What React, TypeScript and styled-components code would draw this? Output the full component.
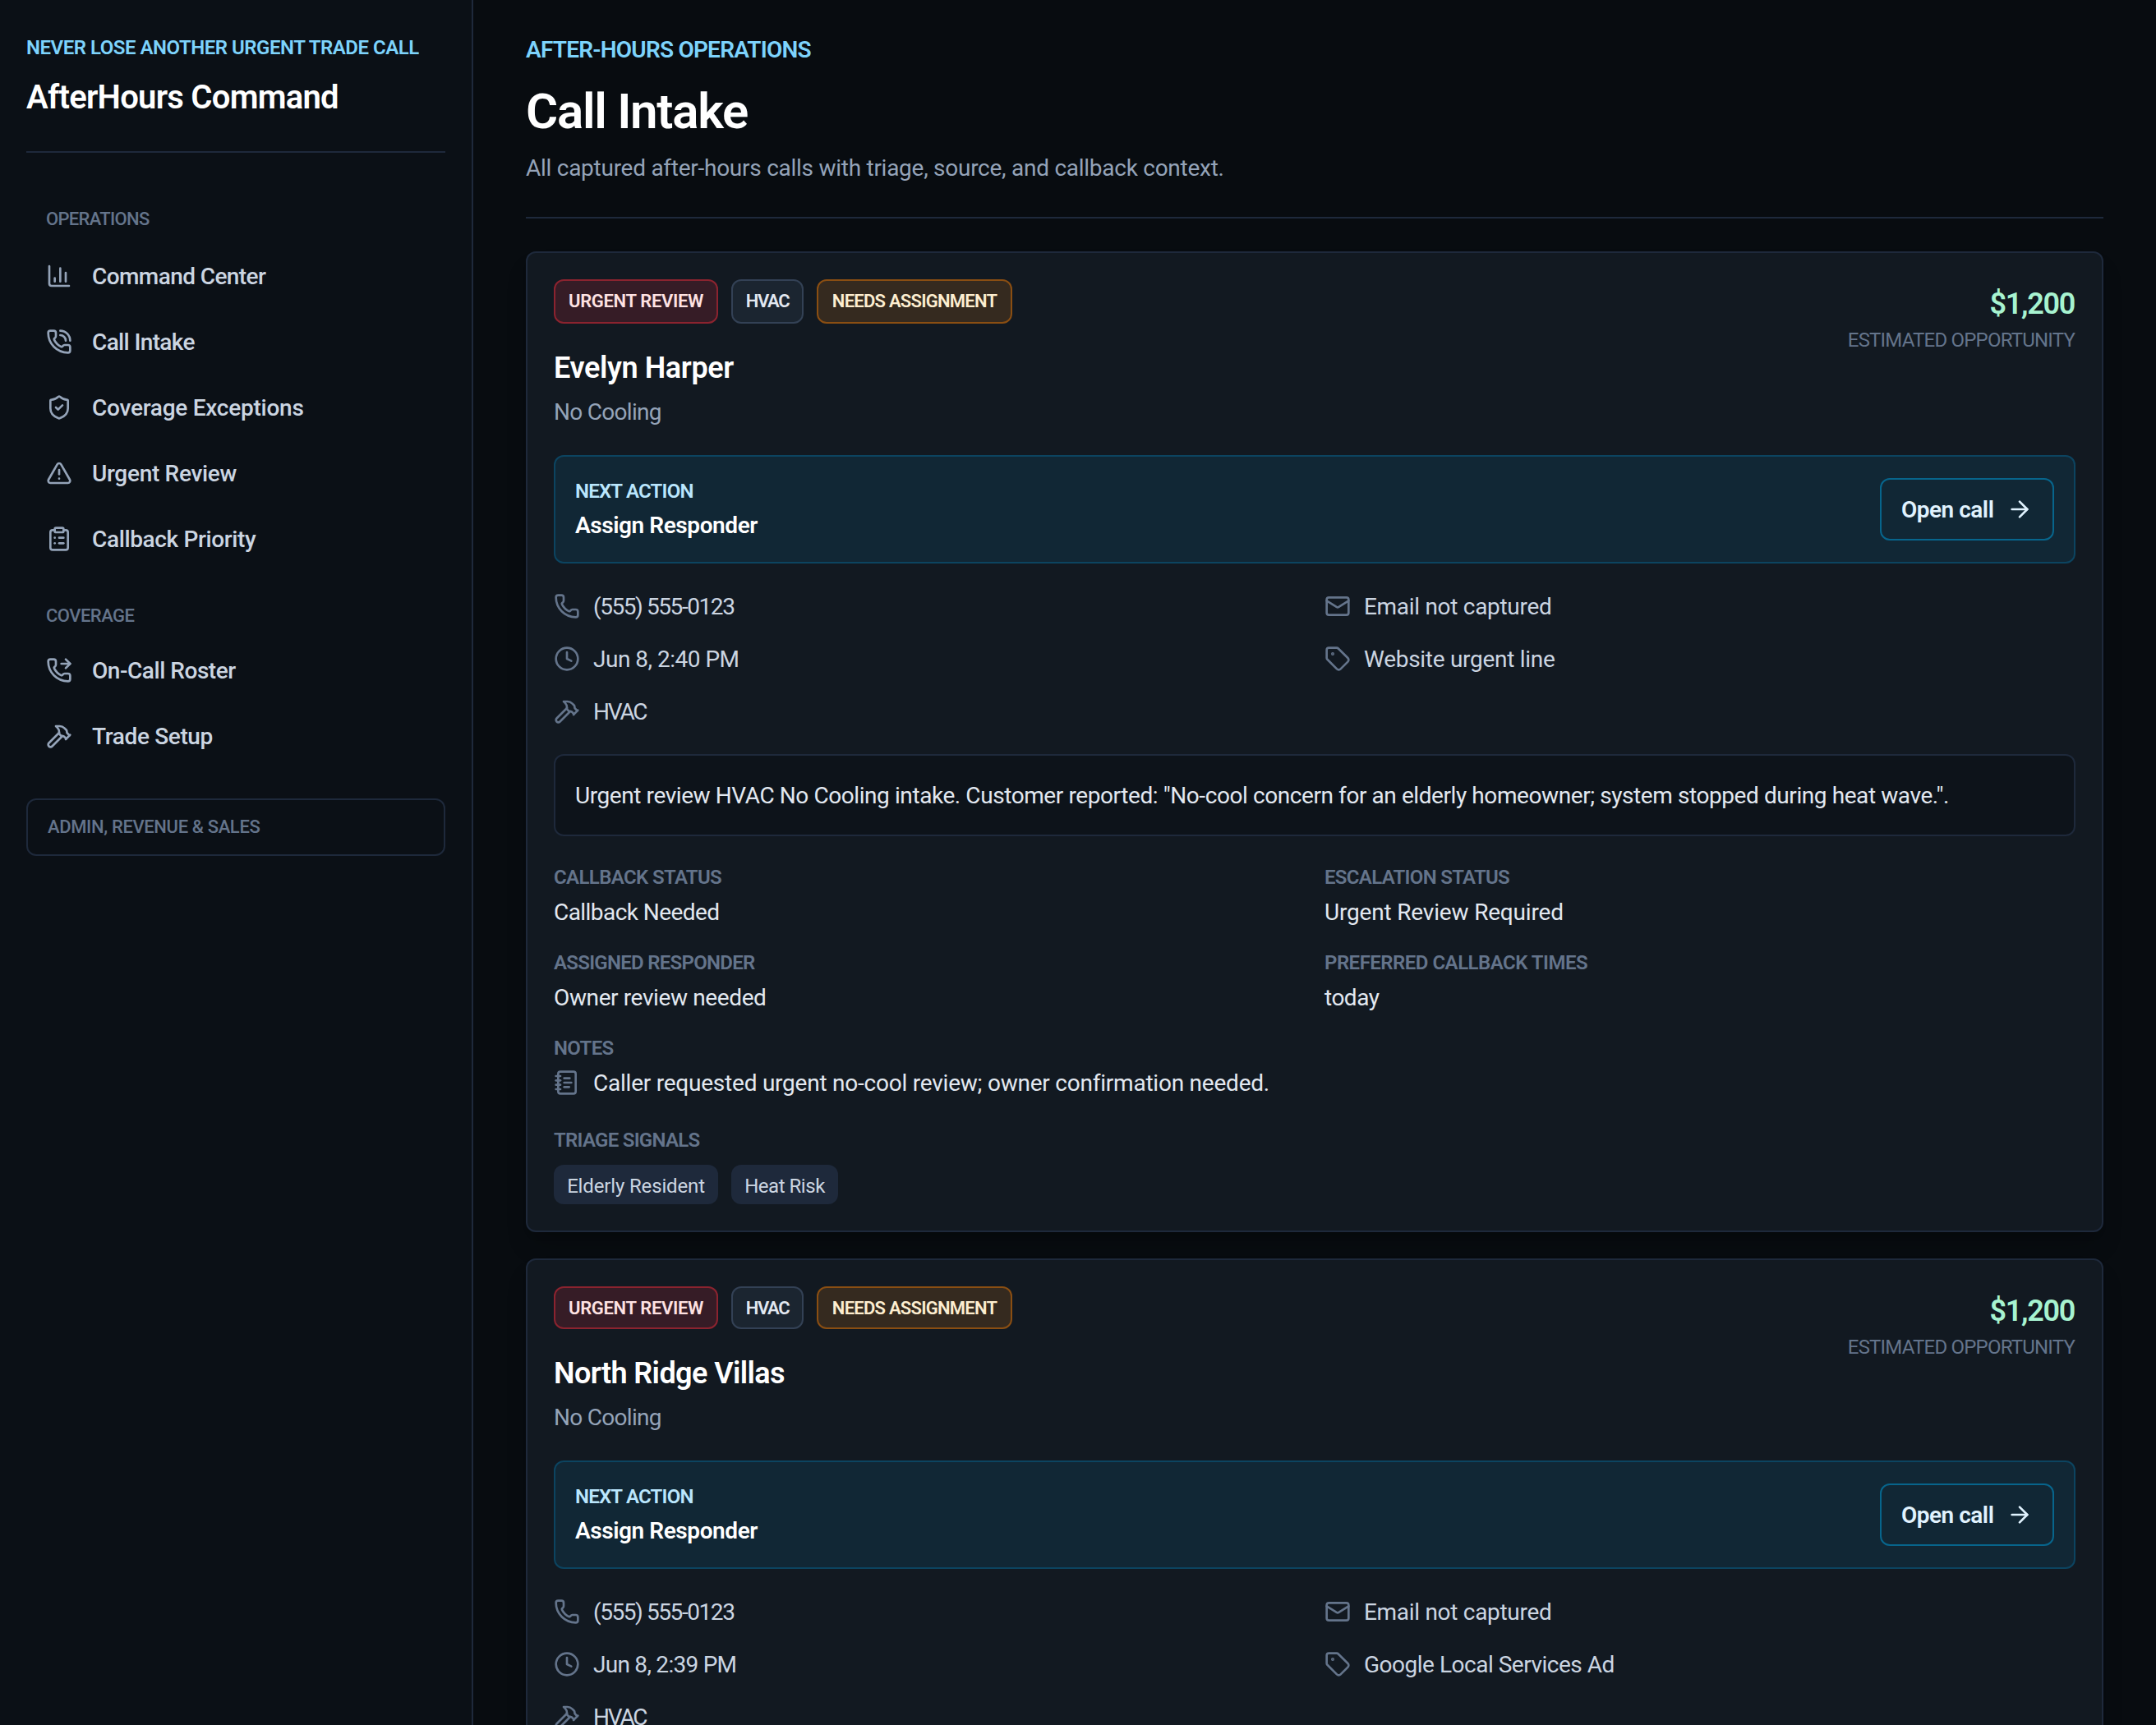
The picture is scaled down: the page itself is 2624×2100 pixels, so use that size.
import React from 'react';
import styled, { createGlobalStyle, css } from 'styled-components';
import {
  ArrowRight,
  ChartColumn,
  ClipboardList,
  Clock,
  Hammer,
  Mail,
  NotebookText,
  Phone,
  PhoneCall,
  PhoneForwarded,
  ShieldCheck,
  Tag,
  TriangleAlert,
  type LucideIcon,
} from 'lucide-react';

const color = {
  page: '#080c10',
  sidebar: '#0b1016',
  card: '#121921',
  inset: '#0d131a',
  line: '#1e293b',
  text: '#e2e8f0',
  soft: '#cbd5e1',
  muted: '#94a3b8',
  faint: '#64748b',
};

const GlobalStyle = createGlobalStyle`
  *, *::before, *::after { box-sizing: border-box; }
  body {
    margin: 0;
    background: ${color.page};
    color: ${color.text};
    font-family: Roboto, "Liberation Sans", sans-serif;
  }
  h1, h2, p, dl, dt, dd, ul { margin: 0; padding: 0; }
`;

/* Every text piece carries its own tracking, in pixels. */
type Tracked = { $track?: number };

const type = (size: number, line: number, weight: number) => css<Tracked>`
  font-size: ${size}px;
  line-height: ${line}px;
  font-weight: ${weight};
  letter-spacing: ${p => p.$track ?? 0}px;
  white-space: nowrap;
`;

const Shell = styled.div`
  display: flex;
  height: 2100px;
  overflow: hidden;
`;

const Sidebar = styled.aside`
  flex: none;
  width: 576px;
  padding: 40px 32px;
  background: ${color.sidebar};
  border-right: 2px solid ${color.line};
`;

const Brand = styled.div`
  padding-bottom: 37px;
  border-bottom: 2px solid ${color.line};
`;

const BrandTag = styled.p<Tracked>`
  ${type(24, 36, 600)}
  color: #7dd3fc;
`;

const BrandName = styled.p<Tracked>`
  ${type(40, 56, 600)}
  margin-top: 15px;
  color: #fff;
`;

const Nav = styled.nav`
  padding: 64px 24px 0;
`;

const NavHeading = styled.p<Tracked & { $spaced?: boolean }>`
  ${type(22, 32, 500)}
  padding-top: 1px;
  margin: ${p => (p.$spaced ? '37px 0 10px' : '0 0 13px')};
  color: ${color.faint};
`;

/* Label beside an icon; the padding seats the capitals on the icon's centre. */
const IconText = styled.span`
  padding-top: 2px;
`;

const NavItem = styled.a<Tracked>`
  ${type(28, 40, 500)}
  display: flex;
  align-items: center;
  gap: 24px;
  height: 80px;
  color: ${color.soft};

  svg { color: ${color.muted}; }
`;

const NavDrawer = styled.div<Tracked>`
  ${type(22, 32, 500)}
  display: flex;
  align-items: center;
  height: 70px;
  margin-top: 36px;
  padding: 0 24px;
  border: 2px solid ${color.line};
  border-radius: 12px;
  color: ${color.faint};
`;

const Main = styled.main`
  flex: 1;
  padding: 40px 64px;
`;

const PageHeader = styled.header`
  padding-bottom: 35px;
  border-bottom: 2px solid ${color.line};
`;

const Eyebrow = styled.p<Tracked>`
  ${type(28, 40, 600)}
  padding-top: 1px;
  color: #7dd3fc;
`;

const PageTitle = styled.h1<Tracked>`
  ${type(60, 72, 600)}
  margin-top: 19px;
  color: #fff;
`;

const PageSummary = styled.p<Tracked>`
  ${type(28, 48, 400)}
  margin-top: 9px;
  color: ${color.muted};
`;

const CardList = styled.div`
  display: grid;
  gap: 32px;
  padding-top: 40px;
`;

const Card = styled.article`
  padding: 32px;
  background: ${color.card};
  border: 2px solid ${color.line};
  border-radius: 12px;
  box-shadow: 0 20px 30px -6px rgba(0, 0, 0, 0.2), 0 8px 12px -8px rgba(0, 0, 0, 0.2);
`;

const CardHead = styled.div`
  display: flex;
  justify-content: space-between;
`;

const BadgeRow = styled.div`
  display: flex;
  gap: 16px;
`;

const badgeTone = {
  red: css`background: #361c26; border-color: #8b232f; color: #fee2e2;`,
  slate: css`background: #1b2530; border-color: #334155; color: #e2e8f0;`,
  amber: css`background: #352a1f; border-color: #8a4e12; color: #fdeed0;`,
};

const Badge = styled.span<Tracked & { $tone: keyof typeof badgeTone; $width: number; $tight?: boolean }>`
  ${type(22, 32, 600)}
  width: ${p => p.$width}px;
  padding: 9px 0 ${p => (p.$tight ? 7 : 9)}px;
  border: 2px solid;
  border-radius: 12px;
  text-align: center;
  ${p => badgeTone[p.$tone]}
`;

const Caller = styled.h2<Tracked>`
  ${type(36, 56, 600)}
  margin-top: 26px;
  color: #fff;
`;

const Issue = styled.p<Tracked>`
  ${type(28, 48, 400)}
  margin-top: 2px;
  color: ${color.muted};
`;

const Estimate = styled.div`
  padding: 2px 1px 0 0;
  text-align: right;
`;

const Amount = styled.p<Tracked>`
  ${type(36, 56, 600)}
  color: #a7f3d0;
`;

const AmountNote = styled.p<Tracked>`
  ${type(24, 32, 400)}
  color: ${color.faint};
`;

const NextAction = styled.div`
  display: flex;
  align-items: center;
  justify-content: space-between;
  height: 132px;
  margin-top: 28px;
  padding: 0 24px;
  background: #112735;
  border: 2px solid #0c4460;
  border-radius: 12px;
`;

const ActionLabel = styled.p<Tracked>`
  ${type(24, 40, 600)}
  color: #bae6fd;
`;

const ActionName = styled.p<Tracked>`
  ${type(28, 44, 600)}
  color: #fff;
`;

const OpenButton = styled.a<Tracked>`
  ${type(28, 40, 600)}
  display: flex;
  align-items: center;
  justify-content: space-between;
  width: 212px;
  height: 76px;
  padding: 0 24px;
  border: 2px solid #07658c;
  border-radius: 12px;
  color: #e0f2fe;
`;

const ContactGrid = styled.div`
  display: grid;
  grid-template-columns: 1fr 1fr;
  gap: 16px 24px;
  margin: 28px 0;
`;

const IconLine = styled.div<Tracked & { $bright?: boolean }>`
  ${type(28, 48, 400)}
  display: flex;
  align-items: center;
  gap: 16px;
  height: 48px;
  color: ${p => (p.$bright ? color.text : color.soft)};

  svg { color: ${color.faint}; }
`;

const Transcript = styled.p<Tracked>`
  ${type(28, 48, 400)}
  padding: 25px 24px 23px;
  background: ${color.inset};
  border: 2px solid ${color.line};
  border-radius: 12px;
`;

const FieldGrid = styled.dl`
  display: grid;
  grid-template-columns: 1fr 1fr;
  gap: 22px 24px;
  margin-top: 34px;
`;

const Field = styled.div<{ $wide?: boolean }>`
  ${p => p.$wide && 'grid-column: 1 / -1;'}
`;

const FieldLabel = styled.dt<Tracked>`
  ${type(24, 32, 600)}
  color: ${color.faint};
`;

const FieldValue = styled.dd<Tracked>`
  ${type(28, 46, 400)}
  && { padding-top: 4px; }
`;

const NoteLine = styled(IconLine)`
  && { margin-top: 2px; }
`;

const Signals = styled.div`
  margin-top: 30px;
`;

const ChipRow = styled.div`
  display: flex;
  gap: 16px;
  margin-top: 14px;
`;

const Chip = styled.span<Tracked & { $width: number }>`
  ${type(24, 32, 400)}
  width: ${p => p.$width}px;
  padding: 10px 0 6px;
  background: ${color.line};
  border-radius: 12px;
  text-align: center;
  color: ${color.soft};
`;

type Piece = [text: string, track: number];
type NavEntry = [icon: LucideIcon, text: string, track: number];

const operations: NavEntry[] = [
  [ChartColumn, 'Command Center', -0.58],
  [PhoneCall, 'Call Intake', -0.64],
  [ShieldCheck, 'Coverage Exceptions', -0.25],
  [TriangleAlert, 'Urgent Review', -0.3],
  [ClipboardList, 'Callback Priority', -0.36],
];

const coverage: NavEntry[] = [
  [PhoneForwarded, 'On-Call Roster', -0.46],
  [Hammer, 'Trade Setup', -0.36],
];

interface Call {
  name: Piece;
  time: Piece;
  source: Piece;
  tightBadges?: boolean;
}

const calls: Call[] = [
  {
    name: ['Evelyn Harper', -0.37],
    time: ['Jun 8, 2:40 PM', -0.5],
    source: ['Website urgent line', -0.28],
  },
  {
    name: ['North Ridge Villas', -0.58],
    time: ['Jun 8, 2:39 PM', -0.73],
    source: ['Google Local Services Ad', -0.49],
    tightBadges: true,
  },
];

function NavLinks({ entries }: { entries: NavEntry[] }) {
  return (
    <>
      {entries.map(([Icon, text, track]) => (
        <NavItem key={text} $track={track}>
          <Icon size={32} />
          <IconText>{text}</IconText>
        </NavItem>
      ))}
    </>
  );
}

function Contact({ icon: Icon, piece }: { icon: LucideIcon; piece: Piece }) {
  return (
    <IconLine $track={piece[1]}>
      <Icon size={32} />
      <IconText>{piece[0]}</IconText>
    </IconLine>
  );
}

function StatusField({ label, value }: { label: Piece; value: Piece }) {
  return (
    <Field>
      <FieldLabel $track={label[1]}>{label[0]}</FieldLabel>
      <FieldValue $track={value[1]}>{value[0]}</FieldValue>
    </Field>
  );
}

function CallCard({ call }: { call: Call }) {
  return (
    <Card>
      <CardHead>
        <div>
          <BadgeRow>
            <Badge $tone="red" $width={200} $track={-0.33} $tight={call.tightBadges}>URGENT REVIEW</Badge>
            <Badge $tone="slate" $width={88} $track={-1.4} $tight={call.tightBadges}>HVAC</Badge>
            <Badge $tone="amber" $width={238} $track={-0.76} $tight={call.tightBadges}>NEEDS ASSIGNMENT</Badge>
          </BadgeRow>
          <Caller $track={call.name[1]}>{call.name[0]}</Caller>
          <Issue $track={-0.7}>No Cooling</Issue>
        </div>
        <Estimate>
          <Amount $track={-1.3}>$1,200</Amount>
          <AmountNote $track={-0.8}>ESTIMATED OPPORTUNITY</AmountNote>
        </Estimate>
      </CardHead>

      <NextAction>
        <div>
          <ActionLabel $track={-0.78}>NEXT ACTION</ActionLabel>
          <ActionName $track={-0.42}>Assign Responder</ActionName>
        </div>
        <OpenButton $track={-0.5}>
          <IconText>Open call</IconText>
          <ArrowRight size={32} />
        </OpenButton>
      </NextAction>

      <ContactGrid>
        <Contact icon={Phone} piece={['(555) 555-0123', -1.42]} />
        <Contact icon={Mail} piece={['Email not captured', -0.3]} />
        <Contact icon={Clock} piece={call.time} />
        <Contact icon={Tag} piece={call.source} />
        <Contact icon={Hammer} piece={['HVAC', -2.2]} />
      </ContactGrid>

      <Transcript $track={-0.418}>
        Urgent review HVAC No Cooling intake. Customer reported: "No-cool concern for an elderly homeowner; system stopped during heat wave.".
      </Transcript>

      <FieldGrid>
        <StatusField label={['CALLBACK STATUS', -0.63]} value={['Callback Needed', -0.56]} />
        <StatusField label={['ESCALATION STATUS', -0.69]} value={['Urgent Review Required', -0.18]} />
        <StatusField label={['ASSIGNED RESPONDER', -0.72]} value={['Owner review needed', -0.38]} />
        <StatusField label={['PREFERRED CALLBACK TIMES', -0.51]} value={['today', -0.5]} />
        <Field $wide>
          <FieldLabel $track={-0.66}>NOTES</FieldLabel>
          <NoteLine as="dd" $bright $track={-0.23}>
            <NotebookText size={32} />
            <IconText>Caller requested urgent no-cool review; owner confirmation needed.</IconText>
          </NoteLine>
        </Field>
      </FieldGrid>

      <Signals>
        <FieldLabel as="p" $track={-0.72}>TRIAGE SIGNALS</FieldLabel>
        <ChipRow>
          <Chip $width={200} $track={-0.15}>Elderly Resident</Chip>
          <Chip $width={130} $track={-0.46}>Heat Risk</Chip>
        </ChipRow>
      </Signals>
    </Card>
  );
}

export default function App() {
  return (
    <>
      <GlobalStyle />
      <Shell>
        <Sidebar>
          <Brand>
            <BrandTag $track={-0.48}>NEVER LOSE ANOTHER URGENT TRADE CALL</BrandTag>
            <BrandName $track={-0.74}>AfterHours Command</BrandName>
          </Brand>
          <Nav>
            <NavHeading $track={-0.68}>OPERATIONS</NavHeading>
            <NavLinks entries={operations} />
            <NavHeading $spaced $track={-0.52}>COVERAGE</NavHeading>
            <NavLinks entries={coverage} />
          </Nav>
          <NavDrawer $track={-0.36}>ADMIN, REVENUE &amp; SALES</NavDrawer>
        </Sidebar>
        <Main>
          <PageHeader>
            <Eyebrow $track={-0.78}>AFTER-HOURS OPERATIONS</Eyebrow>
            <PageTitle $track={-1.28}>Call Intake</PageTitle>
            <PageSummary $track={-0.265}>
              All captured after-hours calls with triage, source, and callback context.
            </PageSummary>
          </PageHeader>
          <CardList>
            {calls.map(call => (
              <CallCard key={call.name[0]} call={call} />
            ))}
          </CardList>
        </Main>
      </Shell>
    </>
  );
}
